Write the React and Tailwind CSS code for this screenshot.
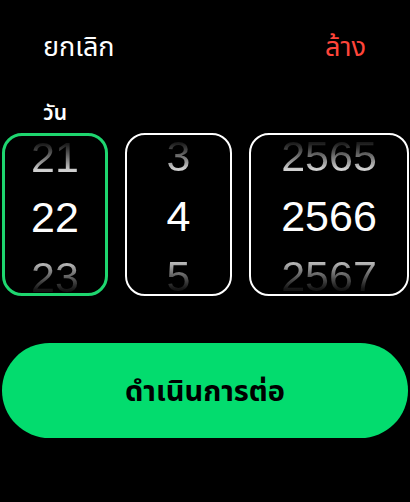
const cols = [
  { items: ['21', '22', '23'], width: 'w-[106px]', active: true },
  { items: ['3', '4', '5'], width: 'w-[107px]' },
  { items: ['2565', '2566', '2567'], width: 'w-[160px]' },
]

function Wheel({ items, width, active }) {
  const [prev, cur, next] = items
  return (
    <div
      className={`${width} h-[163px] rounded-[20px] overflow-hidden flex flex-col items-center ${
        active ? 'border-[3px] border-[#1ed66f]' : 'border-2 border-white'
      }`}
    >
      <div className="mt-[-9px] h-[60px] leading-[60px] text-[43px] bg-linear-to-b from-[#1a1a1a] from-[28%] to-[#d0d0d0] to-[72%] bg-clip-text text-transparent">
        {prev}
      </div>
      <div className="h-[60px] leading-[60px] text-[43px] text-white">{cur}</div>
      <div className="h-[60px] leading-[60px] text-[43px] bg-linear-to-b from-[#b8b8b8] from-[28%] to-[#141414] to-[72%] bg-clip-text text-transparent">
        {next}
      </div>
    </div>
  )
}

export default function App() {
  return (
    <div
      className="w-[410px] h-[502px] bg-black text-white overflow-hidden"
      style={{ fontFamily: '"Liberation Sans", "Noto Sans", "Noto Sans Thai", sans-serif' }}
    >
      <div className="flex justify-between items-center pl-[43px] pr-[44px] pt-[28px] h-[66px] text-[27px]">
        <span>ยกเลิก</span>
        <span className="text-[#ff453a]">ล้าง</span>
      </div>
      <div className="pl-[43px] mt-[34px] h-[33px] text-[21px] font-semibold leading-[26px]">วัน</div>
      <div className="flex gap-[17px] pl-[2px]">
        {cols.map((c, i) => (
          <Wheel key={i} {...c} />
        ))}
      </div>
      <button className="mt-[47px] mx-[2px] w-[406px] h-[95px] pt-[3px] rounded-full bg-[#03dc6e] text-black text-[29px] font-bold">
        ดำเนินการต่อ
      </button>
    </div>
  )
}
